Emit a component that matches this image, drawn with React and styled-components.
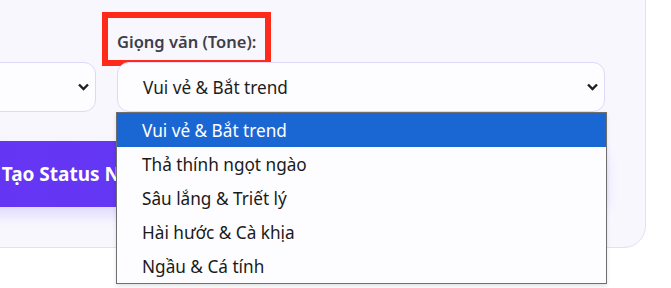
import React from 'react'
import styled, { createGlobalStyle } from 'styled-components';

const GlobalStyle = createGlobalStyle`
  body {
    margin: 0;
    background: #ffffff;
    font-family: "Noto Sans", "Open Sans", sans-serif;
    overflow: hidden;
  }
`;

const Page = styled.div`
  width: 671px;
  height: 288px;
  overflow: hidden;
`;

const Card = styled.div`
  width: 1079px;
  box-sizing: border-box;
  margin: -40px 0 0 -433px;
  padding: 70px 40px 40px 40px;
  background: #f8f7fe;
  border: 1px solid #e2defc;
  border-radius: 22px;
`;

const Grid = styled.div`
  display: grid;
  grid-template-columns: 1fr 1fr;
  column-gap: 21px;
`;

const Field = styled.div`
  display: flex;
  flex-direction: column;
  align-items: flex-start;
`;

const Label = styled.label`
  position: relative;
  font-size: 16.5px;
  line-height: 21px;
  font-weight: 600;
  color: #3e3e48;
  margin-bottom: 10px;
`;

const Highlight = styled.span`
  position: absolute;
  top: -19px;
  bottom: -14px;
  left: -15px;
  right: -15px;
  border: 6px solid #ff2a1a;
  pointer-events: none;
`;

const SelectBox = styled.div`
  position: relative;
  align-self: stretch;
  height: 50px;
  box-sizing: border-box;
  display: flex;
  align-items: center;
  padding-left: 25px;
  background: #fdfcff;
  border: 1px solid #ddd9fb;
  border-radius: 12px;
  font-size: 17.2px;
  color: #1c1c22;
`;

const Chevron = styled.svg`
  position: absolute;
  right: 5px;
  top: 50%;
  transform: translateY(-50%);
`;

const Menu = styled.ul`
  position: absolute;
  z-index: 2;
  top: 49px;
  left: -2px;
  width: 489px;
  margin: 0;
  padding: 0;
  list-style: none;
  background: #fdfdff;
  border: 1px solid #6f6f6f;
  box-shadow: 0 2px 4px rgba(0, 0, 0, 0.12);
`;

const Option = styled.li`
  height: 34px;
  display: flex;
  align-items: center;
  padding-left: 25px;
  font-size: 17.2px;
  color: ${(p) => (p.$active ? '#ffffff' : '#1a1a1a')};
  background: ${(p) => (p.$active ? '#1a67d4' : 'transparent')};
`;

const Button = styled.button`
  margin-top: 29px;
  width: 100%;
  height: 66px;
  padding-left: 26px;
  border: none;
  border-radius: 16px;
  background: linear-gradient(90deg, #6d2ff6, #5a3ff1);
  color: #ffffff;
  font-family: inherit;
  font-size: 19px;
  font-weight: 700;
  box-shadow: 0 8px 14px rgba(110, 80, 245, 0.18);
  cursor: pointer;
`;

const tones = [
  'Vui vẻ & Bắt trend',
  'Thả thính ngọt ngào',
  'Sâu lắng & Triết lý',
  'Hài hước & Cà khịa',
  'Ngầu & Cá tính',
];

const Arrow = () => (
  <Chevron width="13" height="9" viewBox="0 0 13 9">
    <path d="M2 2 L6.5 6.5 L11 2" fill="none" stroke="#1f1f24" strokeWidth="2.4" />
  </Chevron>
);

const App = () => {
  return (
    <Page>
      <GlobalStyle />
      <Card>
        <Grid>
          <Field>
            <Label>Nền tảng (Platform):</Label>
            <SelectBox>
              Facebook
              <Arrow />
            </SelectBox>
          </Field>
          <Field>
            <Label>
              Giọng văn (Tone):
              <Highlight />
            </Label>
            <SelectBox>
              Vui vẻ & Bắt trend
              <Arrow />
              <Menu>
                {tones.map((t, i) => (
                  <Option key={t} $active={i === 0}>{t}</Option>
                ))}
              </Menu>
            </SelectBox>
          </Field>
        </Grid>
        <Button>Tạo Status Ngay Bây Giờ</Button>
      </Card>
    </Page>
  )
}

export default App;
